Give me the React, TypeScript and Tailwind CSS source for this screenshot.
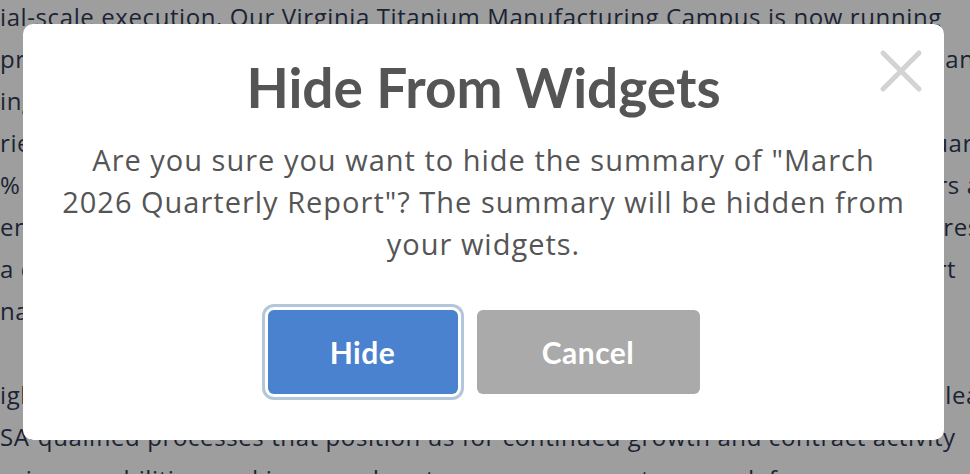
const lines = [
  "ial-scale execution. Our Virginia Titanium Manufacturing Campus is now running",
  "production-ready operations, scaling our output to meet demand from partners and",
  "ing facilities with new equipment, and we expect to grow throughput further by",
  "ries of multi-year agreements that lock in revenue for the coming years, multi-quarter",
  "% growth in contracted backlog compared to the prior period, with key customers and",
  "ent commitments reflect confidence in our roadmap as we deliver on key measures",
  " a disciplined approach to capital and operating efficiency will continue to support",
  "nar",
]

const lines2 = [
  "ighlights include record shipments, expanded production capacity, and we are a leading",
  "SA-qualified processes that position us for continued growth and contract activity",
  "uring capabilities, and increased customer engagement across defense, aerospace",
]

function BackgroundDoc() {
  return (
    <div
      className="text-[24px] leading-[42px] text-[#1b2434] whitespace-nowrap tracking-[0.6px]"
      style={{ fontFamily: "'Open Sans', sans-serif" }}
    >
      <div className="-mt-[4px]">
        {lines.map((l, i) => (
          <div key={i}>{l}</div>
        ))}
      </div>
      <div className="mt-[42px]">
        {lines2.map((l, i) => (
          <div key={i}>{l}</div>
        ))}
      </div>
    </div>
  )
}

export default function App() {
  return (
    <div className="relative h-[474px] w-[970px] overflow-hidden bg-[#9e9e9e]">
      <BackgroundDoc />

      {/* modal */}
      <div
        className="absolute left-[23px] top-[24px] flex h-[416px] w-[921px] flex-col items-center rounded-[10px] bg-white pt-[30px]"
        style={{ fontFamily: "Lato, sans-serif" }}
      >
        <button className="absolute right-[21px] top-[25px] text-[#d3d3d3]">
          <svg width="44" height="44" viewBox="0 0 44 44" fill="none" stroke="currentColor" strokeWidth="5" strokeLinecap="round">
            <path d="M4 4 L40 40 M40 4 L4 40" />
          </svg>
        </button>

        <h2 className="text-[55px] font-bold leading-[66px] text-[#555555]">Hide From Widgets</h2>

        <p
          className="mt-[19px] text-center text-[29px] leading-[42px] tracking-[1px] text-[#555555]"
          style={{ fontFamily: "'Open Sans', sans-serif" }}
        >
          Are you sure you want to hide the summary of "March
          <br />
          2026 Quarterly Report"? The summary will be hidden from
          <br />
          your widgets.
        </p>

        <div className="mt-[45px] flex gap-[19px]">
          <button className="h-[84px] w-[190px] rounded-[6px] bg-[#4a82d0] text-[30px] font-bold tracking-[0.5px] text-white ring-[3px] ring-[#b4c6dc] ring-offset-[3px]">
            Hide
          </button>
          <button className="h-[84px] w-[223px] rounded-[6px] bg-[#aaaaaa] text-[30px] font-bold tracking-[0.5px] text-white">
            Cancel
          </button>
        </div>
      </div>
    </div>
  )
}
